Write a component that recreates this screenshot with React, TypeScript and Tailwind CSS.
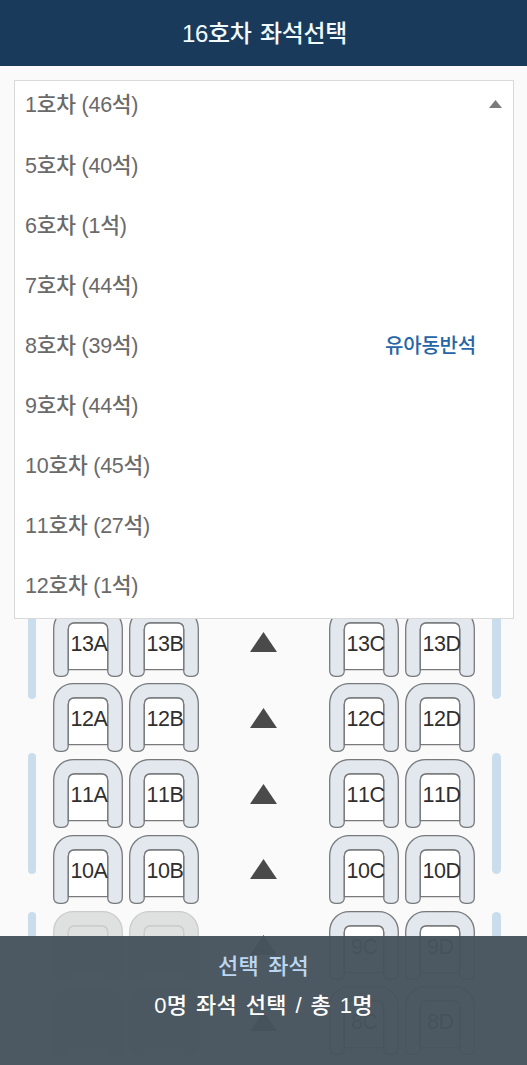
import { useState } from "react";
import clsx from "clsx";

interface Car {
    no: number;
    seats: number;
    tag?: string;
}

const cars: Car[] = [
    { no: 1, seats: 46 },
    { no: 5, seats: 40 },
    { no: 6, seats: 1 },
    { no: 7, seats: 44 },
    { no: 8, seats: 39, tag: "유아동반석" },
    { no: 9, seats: 44 },
    { no: 10, seats: 45 },
    { no: 11, seats: 27 },
    { no: 12, seats: 1 },
];

const rows = [13, 12, 11, 10, 9, 8];
const soldOut = ["9A", "9B", "8A", "8B"];

function Seat({ id, selected, onSelect }: { id: string; selected: boolean; onSelect: () => void }) {
    const disabled = soldOut.includes(id);

    return (
        <button
            type="button"
            disabled={disabled}
            onClick={onSelect}
            aria-label={id}
            className="grid h-[69px] w-[70px] shrink-0 text-left"
        >
            <svg
                viewBox="0 0 70 69"
                className={clsx(
                    "col-start-1 row-start-1 h-[69px] w-[70px]",
                    disabled ? "stroke-[#cbcdcc]" : "stroke-[#77797b]"
                )}
                strokeWidth="1.3"
            >
                {/* Backrest and arms */}
                <path
                    d="M.7 21C.7 8.500 9.500 .7 20.500 .7H49.500C60.500 .7 69.300 8.500 69.300 21V62.500Q69.300 68.300 63.500 68.300H60.500Q54.700 68.300 54.700 62.500V21.500Q54.700 15 48.200 15H21.800Q15.300 15 15.300 21.500V62.500Q15.300 68.300 9.500 68.300H6.500Q.7 68.300 .7 62.500Z"
                    className={disabled ? "fill-[#dfe1e0]" : "fill-[#e3e8ee]"}
                />
                {/* Cushion */}
                <path
                    d="M15.300 61.700V21.500Q15.300 15 21.800 15H48.200Q54.700 15 54.700 21.500V61.700Z"
                    className={disabled ? "fill-[#dfe1e0]" : selected ? "fill-[#b9d4ea]" : "fill-white"}
                />
            </svg>
            {!disabled && (
                <span
                    className={clsx(
                        "col-start-1 row-start-1 mt-[24px] text-[21.5px] leading-6 tracking-[-0.4px] text-[#2f2f2f]",
                        id.length === 3 ? "ml-[17.5px]" : "ml-[22px]"
                    )}
                >
                    {id}
                </span>
            )}
        </button>
    );
}

function WindowRail() {
    return (
        <div className="flex w-[8.5px] shrink-0 flex-col">
            <div className="h-[91.500px] rounded-b-full bg-[#c9ddec]" />
            <div className="mt-[53.500px] h-[121.500px] rounded-full bg-[#c9ddec]" />
            <div className="mt-[38px] h-[123px] rounded-full bg-[#c9ddec]" />
        </div>
    );
}

function CarSelect({ onPick }: { onPick: (no: number) => void }) {
    return (
        <div className="relative z-10 mx-3.5 mt-3.5 h-[539px] w-[500px] shrink-0 border border-[#d9d9d9] bg-white">
            <ul className="-mt-[5.500px]">
                {cars.map((car, i) => (
                    <li
                        key={car.no}
                        onClick={() => onPick(car.no)}
                        className="flex h-[60.1px] cursor-pointer items-center justify-between pr-[11px] pl-2.5 text-[21.5px] font-medium tracking-[-0.25px] text-[#6a6a6a]"
                    >
                        <span>{car.no}호차 ({car.seats}석)</span>
                        {car.tag && <span className="mr-[26px] text-[20px] tracking-[-0.2px] text-[#2565a8]">{car.tag}</span>}
                        {i === 0 && (
                            <svg viewBox="0 0 13 8" className="-mt-[3px] h-2 w-[13px] fill-[#7b7b7b]">
                                <path d="M6.500 0L13 8H0Z" />
                            </svg>
                        )}
                    </li>
                ))}
            </ul>
        </div>
    );
}

export default function App() {
    const [car, setCar] = useState(16);
    const [picked, setPicked] = useState<string | null>(null);

    const renderSeat = (id: string) => (
        <Seat key={id} id={id} selected={picked === id} onSelect={() => setPicked(picked === id ? null : id)} />
    );

    return (
        <div className="relative flex h-[1065px] w-[527px] flex-col overflow-hidden bg-[#fafafa] font-['Liberation_Sans','Noto_Sans_CJK_KR',sans-serif] [font-kerning:none]">
            <header className="flex h-[66px] shrink-0 items-center justify-center bg-[#1a3a5c]">
                <h1 className="mt-px ml-0.5 text-[24px] font-medium tracking-[-0.3px] [word-spacing:2px] text-[#f1faff]">{car}호차 좌석선택</h1>
            </header>

            <CarSelect onPick={setCar} />

            {/* Seat map, scrolled under the open list */}
            <main className="-mt-[11.500px] flex shrink-0 pl-[27.500px]">
                <WindowRail />
                <div className="ml-[17px] flex flex-col gap-[6.800px]">
                    {rows.map((row) => (
                        <div key={row} className="flex h-[69px] items-center">
                            <div className="flex gap-1.5">{["A", "B"].map((c) => renderSeat(`${row}${c}`))}</div>
                            <svg viewBox="0 0 27 20" className="mr-[52px] ml-[51px] h-5 w-[27px] fill-[#4a4a4a]">
                                <path d="M13.500 0L27 20H0Z" />
                            </svg>
                            <div className="flex gap-1.5">{["C", "D"].map((c) => renderSeat(`${row}${c}`))}</div>
                        </div>
                    ))}
                </div>
                <div className="ml-[17px] flex">
                    <WindowRail />
                </div>
            </main>

            <footer className="absolute inset-x-0 bottom-0 z-20 flex h-[129px] flex-col items-center bg-[#47545d]/97 pt-[14px] font-medium">
                <p className="text-[22px] leading-[34px] tracking-[0.2px] [word-spacing:3px] text-[#bdd7f3]">선택 좌석</p>
                <p className="mt-[5px] text-[22px] leading-[34px] tracking-[0.2px] [word-spacing:2.5px] text-white">
                    {picked ? 1 : 0}명 좌석 선택 / 총 1명
                </p>
            </footer>
        </div>
    );
}
